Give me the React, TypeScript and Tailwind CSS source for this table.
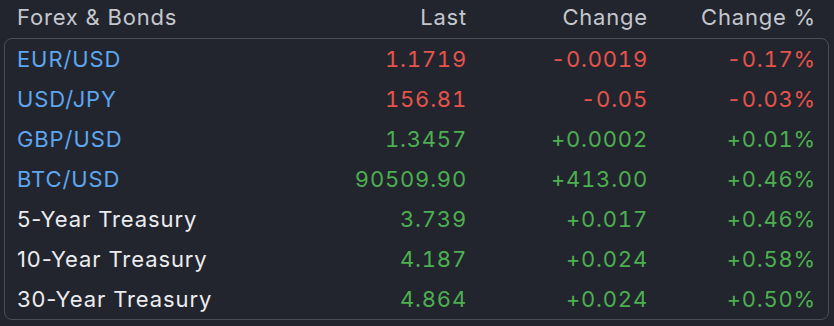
import React from 'react';

type Row = { name: string; last: string; change: string; pct: string; fx?: boolean };

const rows: Row[] = [
    { name: 'EUR/USD', last: '1.1719', change: '-0.0019', pct: '-0.17%', fx: true },
    { name: 'USD/JPY', last: '156.81', change: '-0.05', pct: '-0.03%', fx: true },
    { name: 'GBP/USD', last: '1.3457', change: '+0.0002', pct: '+0.01%', fx: true },
    { name: 'BTC/USD', last: '90509.90', change: '+413.00', pct: '+0.46%', fx: true },
    { name: '5-Year Treasury', last: '3.739', change: '+0.017', pct: '+0.46%' },
    { name: '10-Year Treasury', last: '4.187', change: '+0.024', pct: '+0.58%' },
    { name: '30-Year Treasury', last: '4.864', change: '+0.024', pct: '+0.50%' },
];

const cols = 'grid grid-cols-[250px_200px_181px_168px] items-center';

export default function App() {
    return (
        <div
            className="w-[834px] h-[326px] bg-[#22252d] pl-[4px] pr-[5px] text-[22px] tracking-[0.8px] overflow-hidden"
            style={{ fontFamily: 'Inter, "Noto Sans", sans-serif' }}
        >
            {/* Header */}
            <div className={`${cols} h-[38px] px-[13px] text-[#c4c7ce] pb-[4px]`}>
                <div>Forex &amp; Bonds</div>
                <div className="text-right">Last</div>
                <div className="text-right">Change</div>
                <div className="text-right">Change %</div>
            </div>

            {/* Table */}
            <div className="border border-[#4a4e5b] rounded-[8px] px-[12px]">
                {rows.map((r) => {
                    const down = r.change.startsWith('-');
                    const tone = down ? 'text-[#e5534b]' : 'text-[#4caf50]';
                    return (
                        <div key={r.name} className={`${cols} h-[40px]`}>
                            <div className={`tracking-[0.9px] ${r.fx ? 'text-[#5ea6f0]' : 'text-[#ececef]'}`}>{r.name}</div>
                            <div className={`text-right tabular-nums ${tone}`}>{r.last}</div>
                            <div className={`text-right tabular-nums ${tone}`}>{r.change}</div>
                            <div className={`text-right tabular-nums ${tone}`}>{r.pct}</div>
                        </div>
                    );
                })}
            </div>
        </div>
    );
}
